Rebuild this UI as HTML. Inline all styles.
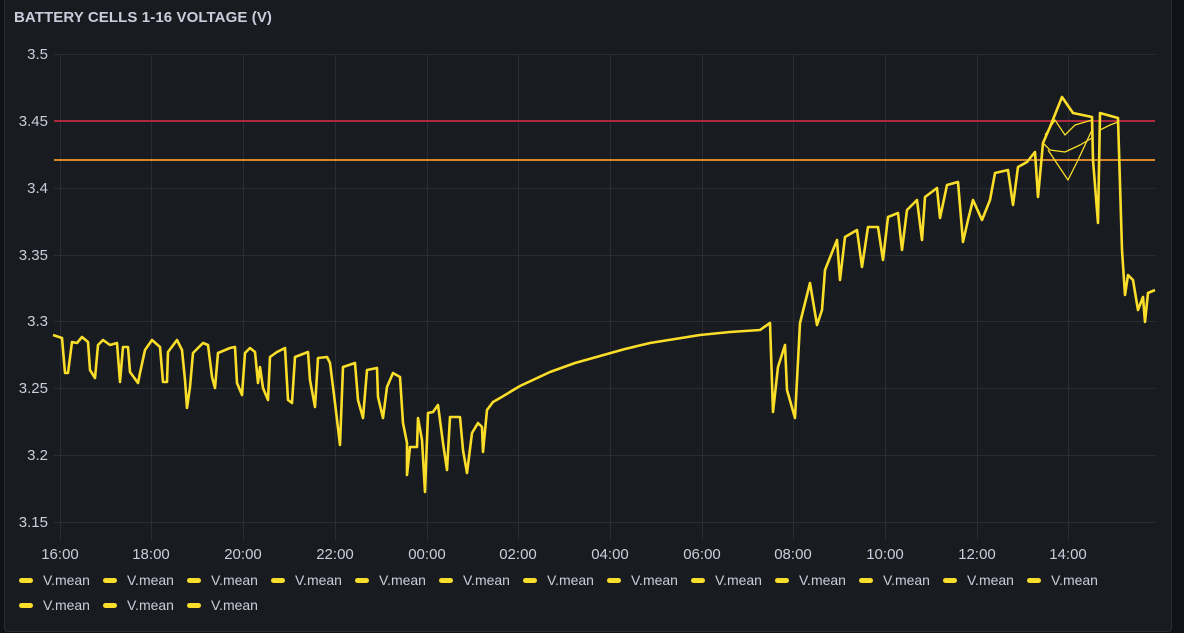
<!DOCTYPE html>
<html><head><meta charset="utf-8"><style>
html,body{margin:0;padding:0;background:#111217;width:1184px;height:633px;overflow:hidden;font-family:"Liberation Sans",sans-serif}
.panel{position:absolute;left:4px;top:-2px;width:1166px;height:632px;background:#181b1f;border:1px solid #2a2d33;border-radius:4px}
.title{position:absolute;left:14px;top:9px;color:#ccccdc;font-size:15px;font-weight:bold;letter-spacing:0.1px}
.lg{position:absolute;font-size:14px;color:#ccccdc}
.sw{position:absolute;width:14px;height:5px;border-radius:3px;background:#fade2a}
</style></head><body>
<div class="panel"></div>
<div class="title">BATTERY CELLS 1-16 VOLTAGE (V)</div>
<svg width="1184" height="633" style="position:absolute;left:0;top:0">
<g stroke="#2a2d33" stroke-width="1">
<line x1="54" x2="1155" y1="54.5" y2="54.5"/><line x1="54" x2="1155" y1="188.5" y2="188.5"/><line x1="54" x2="1155" y1="255.5" y2="255.5"/><line x1="54" x2="1155" y1="321.5" y2="321.5"/><line x1="54" x2="1155" y1="388.5" y2="388.5"/><line x1="54" x2="1155" y1="455.5" y2="455.5"/><line x1="54" x2="1155" y1="522.5" y2="522.5"/>
<line y1="54" y2="540" x1="60.5" x2="60.5"/><line y1="54" y2="540" x1="151.5" x2="151.5"/><line y1="54" y2="540" x1="243.5" x2="243.5"/><line y1="54" y2="540" x1="335.5" x2="335.5"/><line y1="54" y2="540" x1="427.5" x2="427.5"/><line y1="54" y2="540" x1="518.5" x2="518.5"/><line y1="54" y2="540" x1="610.5" x2="610.5"/><line y1="54" y2="540" x1="702.5" x2="702.5"/><line y1="54" y2="540" x1="793.5" x2="793.5"/><line y1="54" y2="540" x1="885.5" x2="885.5"/><line y1="54" y2="540" x1="977.5" x2="977.5"/><line y1="54" y2="540" x1="1068.5" x2="1068.5"/>
</g>
<line x1="54" x2="1155" y1="121" y2="121" stroke="#b0283d" stroke-width="2"/>
<line x1="54" x2="1155" y1="160" y2="160" stroke="#d9862b" stroke-width="2"/>
<g fill="#ccccdc" font-size="15" font-family="Liberation Sans, sans-serif">
<g text-anchor="end"><text x="48" y="59">3.5</text><text x="48" y="126">3.45</text><text x="48" y="193">3.4</text><text x="48" y="260">3.35</text><text x="48" y="326">3.3</text><text x="48" y="393">3.25</text><text x="48" y="460">3.2</text><text x="48" y="527">3.15</text></g>
<g text-anchor="middle"><text x="60" y="559">16:00</text><text x="151" y="559">18:00</text><text x="243" y="559">20:00</text><text x="335" y="559">22:00</text><text x="427" y="559">00:00</text><text x="518" y="559">02:00</text><text x="610" y="559">04:00</text><text x="702" y="559">06:00</text><text x="793" y="559">08:00</text><text x="885" y="559">10:00</text><text x="977" y="559">12:00</text><text x="1068" y="559">14:00</text></g>
</g>
<g fill="none" stroke="#fade2a" stroke-width="2.6" stroke-linejoin="round">
<polyline points="53,335 62,338 65,373 68,373 72,342 77,343 82,337 88,342 90,370 95,378 98,345 103,340 110,345 117,343 120,382 123,347 128,347 130,372 138,383 140,373 145,350 152,340 160,347 163,382 167,382 168,352 177,340 182,350 185,380 187,408 190,387 193,353 203,343 208,345 212,377 215,388 218,353 230,348 235,347 237,383 242,395 245,353 250,348 255,352 258,383 260,367 263,388 268,400 270,357 277,352 285,348 288,400 292,403 295,357 308,352 310,380 315,407 318,358 327,357 330,363 335,403 340,445 343,367 355,363 358,400 363,418 367,370 377,368 378,397 383,418 387,387 393,373 400,377 403,423 407,443 407,475 410,447 417,447 418,418 422,440 425,492 428,413 433,412 438,405 443,443 447,470 450,417 460,417 463,450 467,473 472,433 478,423 482,427 483,452 487,410 493,402 500,398 520,386 550,372 575,363 600,356 625,349 650,343 675,339 700,335 730,332 760,330 770,323 773,412 778,367 785,345 787,390 795,418 800,323 810,283 817,325 822,310 825,270 837,240 840,280 845,237 857,230 862,267 868,227 878,227 883,260 888,217 898,213 902,250 907,210 917,200 922,240 925,197 937,188 940,218 947,185 958,182 963,242 968,220 973,200 982,220 990,200 995,173 1008,170 1013,205 1018,167 1027,162 1035,152 1038,197 1043,143 1050,127 1062,97 1073,113 1092,117 1093,160 1098,223 1100,113 1118,118 1122,250 1125,295 1128,275 1133,280 1138,310 1143,297 1145,322 1148,293 1155,290"/>
<polyline stroke-width="1.3" points="1043,143 1050,150 1065,152 1080,145 1092,138"/>
<polyline stroke-width="1.3" points="1045,135 1055,120 1065,135 1075,125 1092,120"/>
<polyline stroke-width="1.3" points="1048,150 1058,165 1068,180 1078,160 1092,130"/>
<polyline stroke-width="1.3" points="1100,130 1110,125 1118,122"/>
</g>
</svg>
<div class="sw" style="left:19px;top:578px"></div><div class="lg" style="left:43px;top:572px">V.mean</div>
<div class="sw" style="left:103px;top:578px"></div><div class="lg" style="left:127px;top:572px">V.mean</div>
<div class="sw" style="left:187px;top:578px"></div><div class="lg" style="left:211px;top:572px">V.mean</div>
<div class="sw" style="left:271px;top:578px"></div><div class="lg" style="left:295px;top:572px">V.mean</div>
<div class="sw" style="left:355px;top:578px"></div><div class="lg" style="left:379px;top:572px">V.mean</div>
<div class="sw" style="left:439px;top:578px"></div><div class="lg" style="left:463px;top:572px">V.mean</div>
<div class="sw" style="left:523px;top:578px"></div><div class="lg" style="left:547px;top:572px">V.mean</div>
<div class="sw" style="left:607px;top:578px"></div><div class="lg" style="left:631px;top:572px">V.mean</div>
<div class="sw" style="left:691px;top:578px"></div><div class="lg" style="left:715px;top:572px">V.mean</div>
<div class="sw" style="left:775px;top:578px"></div><div class="lg" style="left:799px;top:572px">V.mean</div>
<div class="sw" style="left:859px;top:578px"></div><div class="lg" style="left:883px;top:572px">V.mean</div>
<div class="sw" style="left:943px;top:578px"></div><div class="lg" style="left:967px;top:572px">V.mean</div>
<div class="sw" style="left:1027px;top:578px"></div><div class="lg" style="left:1051px;top:572px">V.mean</div>
<div class="sw" style="left:19px;top:603px"></div><div class="lg" style="left:43px;top:597px">V.mean</div>
<div class="sw" style="left:103px;top:603px"></div><div class="lg" style="left:127px;top:597px">V.mean</div>
<div class="sw" style="left:187px;top:603px"></div><div class="lg" style="left:211px;top:597px">V.mean</div>
</body></html>
